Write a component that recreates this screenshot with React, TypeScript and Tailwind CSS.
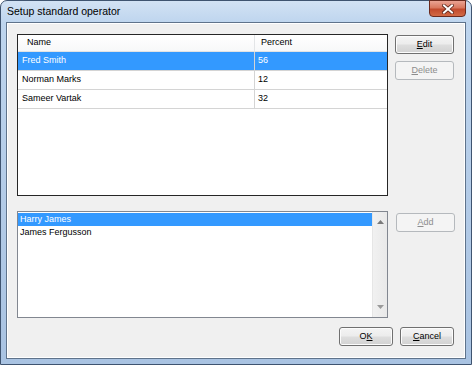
const operators = [
  { name: "Fred Smith", percent: "56", selected: true },
  { name: "Norman Marks", percent: "12", selected: false },
  { name: "Sameer Vartak", percent: "32", selected: false },
];

const available = [
  { name: "Harry James", selected: true },
  { name: "James Fergusson", selected: false },
];

function Btn({
  children,
  disabled,
  className = "w-[59px]",
}: {
  children: React.ReactNode;
  disabled?: boolean;
  className?: string;
}) {
  return (
    <div
      className={
        "h-[19px] flex items-center justify-center rounded-[3px] border text-[9px] " +
        (disabled
          ? "border-[#b5b9bd] bg-[#f4f4f4] text-[#8d8d8d]"
          : "border-[#707070] bg-[linear-gradient(to_bottom,#f4f4f4_0%,#ececec_48%,#dedede_52%,#d2d2d2_100%)] text-black shadow-[inset_0_0_0_1px_#fcfcfc]") +
        " " +
        className
      }
    >
      {children}
    </div>
  );
}

const App = () => {
  return (
    <div className="w-[472px] h-[365px] flex flex-col rounded-t-[7px] border border-[#3f5470] bg-[linear-gradient(to_bottom,#d2e2f4_0px,#bed5ee_22px,#b3cbe7_200px,#a9c3e2_100%)] font-['Liberation_Sans',Arial,sans-serif] text-black">
      {/* title bar */}
      <div className="h-[21px] flex items-start justify-between">
        <div className="pl-[6px] pt-[4px] text-[10.5px] leading-[13px]">
          Setup standard operator
        </div>
        <div className="mr-[5px] -mt-[1px] h-[17px] w-[37px] flex items-center justify-center rounded-b-[4px] border border-[#6b2a1e] bg-[linear-gradient(to_bottom,#eaa393_0%,#d9785f_45%,#c24a2d_55%,#d26a45_100%)]">
          <svg width="12" height="10" viewBox="0 0 12 10">
            <path d="M2 1.5 L10 8.5 M10 1.5 L2 8.5" stroke="#5b2216" strokeWidth="3.6" strokeLinecap="square" />
            <path d="M2 1.5 L10 8.5 M10 1.5 L2 8.5" stroke="#ffffff" strokeWidth="2" strokeLinecap="square" />
          </svg>
        </div>
      </div>

      {/* client area */}
      <div className="mx-[5px] mb-[5px] flex-1 border border-[#5f738b]">
        <div className="h-full border border-white bg-[#f0f0f0] pl-[9px] pt-[10px] text-[9px]">
          {/* operators */}
          <div className="flex gap-[7px]">
            <div className="w-[371px] h-[162px] border border-[#262626] bg-white">
              <div className="h-[17px] flex border-b border-[#e3e3e3] bg-[linear-gradient(to_bottom,#ffffff,#f7f8f9)]">
                <div className="w-[237px] pl-[9px] flex items-center border-r border-[#e3e5e7]">Name</div>
                <div className="flex-1 pl-[6px] flex items-center">Percent</div>
              </div>
              {operators.map((op) => (
                <div
                  key={op.name}
                  className={
                    "h-[19px] flex border-b border-[#d4d4d4] " +
                    (op.selected ? "bg-[#3399ff] text-white" : "")
                  }
                >
                  <div className="w-[237px] pl-[4px] flex items-center border-r border-[#d4d4d4]">{op.name}</div>
                  <div className="flex-1 pl-[3px] flex items-center">{op.percent}</div>
                </div>
              ))}
            </div>
            <div className="mt-[1px] flex flex-col gap-[7px]">
              <Btn>
                <span className="underline underline-offset-1">E</span>dit
              </Btn>
              <Btn disabled>
                <span className="underline underline-offset-1">D</span>elete
              </Btn>
            </div>
          </div>

          {/* available */}
          <div className="mt-[15px] flex gap-[7px]">
            <div className="w-[371px] h-[107px] flex border border-[#828790] bg-white">
              <div className="flex-1 pt-[1px]">
                {available.map((p) => (
                  <div
                    key={p.name}
                    className={
                      "h-[13px] pl-[2px] flex items-center " +
                      (p.selected ? "bg-[#3399ff] text-white" : "")
                    }
                  >
                    {p.name}
                  </div>
                ))}
              </div>
              <div className="w-[15px] flex flex-col items-center justify-between border-l border-[#e6e6e6] bg-[linear-gradient(to_right,#f1f1f1,#e9e9e9)] py-[8px]">
                <svg width="7" height="4" viewBox="0 0 7 4">
                  <path d="M0 4 L3.5 0 L7 4 Z" fill="#7a7a7a" />
                </svg>
                <svg width="7" height="4" viewBox="0 0 7 4">
                  <path d="M0 0 L7 0 L3.5 4 Z" fill="#9a9a9a" />
                </svg>
              </div>
            </div>
            <Btn disabled className="w-[59px] mt-[2px] ml-[1px]">
              <span className="underline underline-offset-1">A</span>dd
            </Btn>
          </div>

          {/* footer */}
          <div className="mt-[9px] pr-[10px] flex justify-end gap-[7px]">
            <Btn className="w-[54px]">
              O<span className="underline underline-offset-1">K</span>
            </Btn>
            <Btn className="w-[54px]">
              <span className="underline underline-offset-1">C</span>ancel
            </Btn>
          </div>
        </div>
      </div>
    </div>
  );
};

export default App;
